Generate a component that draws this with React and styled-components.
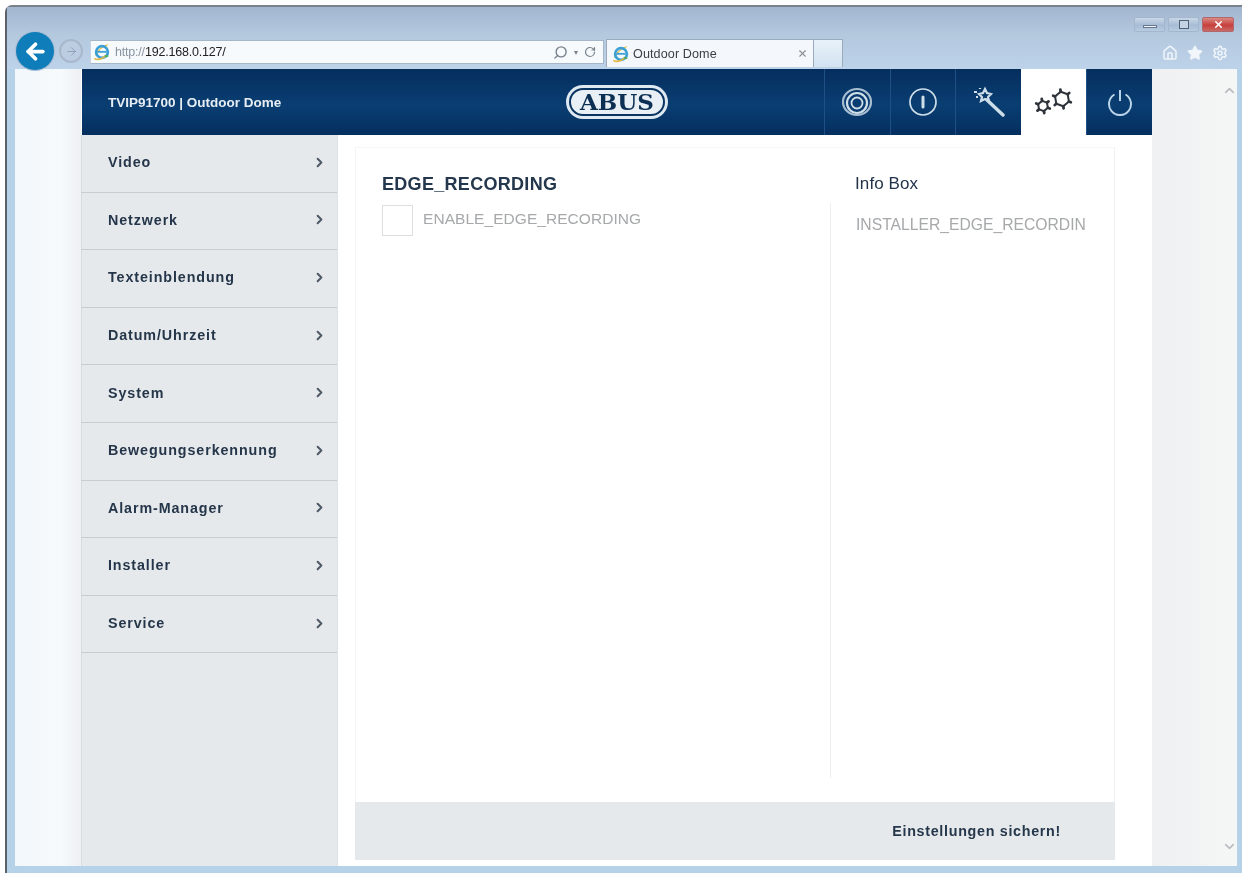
import styled, { createGlobalStyle } from "styled-components";
import { ArrowLeft, ArrowRight, ChevronDown, ChevronRight, ChevronUp, Home, RotateCw, Search, Settings, Star, X } from "lucide-react";

const menu = [
  "Video",
  "Netzwerk",
  "Texteinblendung",
  "Datum/Uhrzeit",
  "System",
  "Bewegungserkennung",
  "Alarm-Manager",
  "Installer",
  "Service",
];

const GlobalStyle = createGlobalStyle`
  html, body {
    margin: 0;
    padding: 0;
    background: #fff;
  }
  * {
    box-sizing: border-box;
  }
`;

const Page = styled.div`
  width: 1242px;
  height: 873px;
  padding: 5px 0 0 5px;
  overflow: hidden;
  background: #fff;
  font-family: "Liberation Sans", Arial, sans-serif;
  filter: blur(0.45px);
`;

const Frame = styled.div`
  display: flex;
  flex-direction: column;
  height: 868px;
  padding: 0 5px 7px 8px;
  border-radius: 7px 0 0 0;
  border-top: 2px solid #79818a;
  border-left: 2px solid #5c6167;
  background: #b5d2e8;
`;

const Chrome = styled.div`
  margin: 0 -5px 0 -8px;
  padding: 11px 8px 0 9px;
  height: 62px;
  flex: none;
  background: linear-gradient(180deg, #a3b6d0 0%, #b4c8de 45%, #bdd3e9 100%);
`;

const WindowControls = styled.div`
  display: flex;
  justify-content: flex-end;
  gap: 3px;
  height: 17px;
  margin-top: -1px;
`;

const WinButton = styled.div`
  width: ${(props) => (props.$wide ? 32 : 31)}px;
  height: 15px;
  display: flex;
  align-items: center;
  justify-content: center;
  border: 1px solid ${(props) => (props.$close ? "#b0686a" : "#a3b6cc")};
  border-radius: 2px;
  background: ${(props) =>
    props.$close
      ? "linear-gradient(180deg, #d98a85 0%, #c8403c 55%, #c96a66 100%)"
      : "linear-gradient(180deg, #c9d8e8 0%, #a7bcd4 55%, #b7cbe0 100%)"};
  color: #fff;
`;

const MinGlyph = styled.span`
  width: 14px;
  height: 3px;
  margin-top: 4px;
  background: #f1f5f9;
  border: 1px solid #66788f;
`;

const MaxGlyph = styled.span`
  width: 10px;
  height: 9px;
  border: 1px solid #4f6178;
  background: #c3d3e4;
`;

const NavRow = styled.div`
  display: flex;
  align-items: flex-end;
  height: 34px;
  margin-top: -1px;
`;

const BackButton = styled.div`
  width: 38px;
  height: 38px;
  margin-bottom: -3px;
  flex: none;
  border-radius: 50%;
  display: flex;
  align-items: center;
  justify-content: center;
  background: #0f7dba;
  color: #fff;
  box-shadow: 0 0 0 1px #a9bdd3;
  position: relative;
`;

const ForwardButton = styled.div`
  width: 24px;
  height: 24px;
  margin: 0 7px 4px 5px;
  flex: none;
  border-radius: 50%;
  display: flex;
  align-items: center;
  justify-content: center;
  border: 2px solid #a9b7ca;
  background: #bccde1;
  color: #8fa0b6;
`;

const AddressBar = styled.div`
  width: 514px;
  height: 24px;
  margin-bottom: 3px;
  flex: none;
  display: flex;
  align-items: center;
  padding: 0 7px 0 2px;
  background: #f7fafd;
  border: 1px solid #a6b6c9;
  border-left-color: #c6d3e1;
`;

const Url = styled.span`
  margin-left: 4px;
  font-size: 12.5px;
  letter-spacing: -0.2px;
  color: #222;
  flex: 1;
`;

const UrlMuted = styled.span`
  color: #8a95a2;
`;

const AddressTools = styled.div`
  display: flex;
  align-items: center;
  gap: 6px;
  color: #77818c;
  font-size: 8px;
`;

const Tab = styled.div`
  width: 208px;
  height: 28px;
  margin-left: 2px;
  flex: none;
  display: flex;
  align-items: center;
  padding: 0 5px 0 5px;
  background: #f4f8fc;
  border: 1px solid #9aabbe;
  border-bottom: none;
  font-size: 12.6px;
  letter-spacing: 0.1px;
  color: #3a3f46;
`;

const TabTitle = styled.span`
  margin-left: 3px;
  flex: 1;
`;

const EmptyTab = styled.div`
  width: 29px;
  height: 28px;
  flex: none;
  background: linear-gradient(180deg, #e8f1f9, #d3e3f1);
  border-right: 1px solid #9aabbe;
  border-top: 1px solid #9aabbe;
`;

const BrowserTools = styled.div`
  margin-left: auto;
  margin-right: 6px;
  margin-bottom: 6px;
  display: flex;
  gap: 9px;
  color: #eef4f9;
`;

const Content = styled.div`
  flex: 1;
  min-height: 0;
  display: flex;
`;

const Gutter = styled.div`
  width: 66px;
  flex: none;
  background: linear-gradient(90deg, #f2f7fb 0%, #f6fafd 70%, #eef0f2 100%);
`;

const AppColumn = styled.div`
  width: 1071px;
  flex: none;
  display: flex;
  flex-direction: column;
  background: #fff;
`;

const Header = styled.header`
  height: 66px;
  flex: none;
  display: flex;
  margin-left: 1px;
  background: linear-gradient(180deg, #052e5e 0%, #0a3e72 55%, #042f5f 100%);
`;

const Brand = styled.div`
  width: 328px;
  flex: none;
  padding-left: 26px;
  display: flex;
  align-items: center;
  font-size: 13.5px;
  font-weight: 700;
  color: #e6edf3;
`;

const LogoSlot = styled.div`
  width: 414px;
  flex: none;
  display: flex;
  justify-content: center;
  align-items: center;
  padding-bottom: 1px;
`;

const Logo = styled.div`
  width: 102px;
  height: 34px;
  padding: 3px;
  border-radius: 17px;
  background: #dfe9f1;
`;

const LogoInner = styled.div`
  height: 100%;
  border-radius: 14px;
  border: 2px solid #0a3563;
  display: flex;
  align-items: center;
  justify-content: center;
  background: #e8eff5;
  font-family: "DejaVu Serif", serif;
  font-size: 23px;
  font-weight: 700;
  color: #0c3053;
`;

const HeaderButton = styled.div`
  width: 65.6px;
  flex: none;
  display: flex;
  align-items: center;
  justify-content: center;
  color: ${(props) => (props.$active ? "#2f343b" : "#cfdfea")};
  background: ${(props) => (props.$active ? "#fff" : "transparent")};
  border-left: 1px solid ${(props) => (props.$active ? "#fff" : "#1f5085")};
`;

const Body = styled.div`
  flex: 1;
  min-height: 0;
  display: flex;
`;

const Sidebar = styled.nav`
  width: 257px;
  flex: none;
  background: #e6e9eb;
  box-shadow: inset 1px 0 0 #d9dcdf;
  border-right: 1px solid #dfe2e4;
`;

const MenuItem = styled.div`
  height: 57.6px;
  display: flex;
  align-items: center;
  justify-content: space-between;
  padding: 0 10px 2px 27px;
  border-bottom: 1.5px solid #c9cdd0;
  font-size: 14.3px;
  font-weight: 700;
  letter-spacing: 0.9px;
  color: #25364a;
`;

const Main = styled.main`
  flex: 1;
  min-width: 0;
  display: flex;
  flex-direction: column;
  padding: 12px 37px 6px 17px;
`;

const Panel = styled.section`
  flex: 1;
  min-height: 0;
  display: flex;
  border-top: 1px solid #f5f6f7;
  border-left: 1px solid #f3f4f5;
  border-right: 1px solid #eef0f1;
`;

const SettingsCol = styled.div`
  width: 474px;
  flex: none;
  padding: 26px 0 0 26px;
`;

const SectionTitle = styled.h2`
  margin: 0;
  font-size: 18px;
  line-height: 20px;
  font-weight: 700;
  letter-spacing: 0.3px;
  color: #24374c;
`;

const CheckRow = styled.label`
  display: flex;
  margin-top: 11px;
  gap: 10px;
`;

const CheckBox = styled.span`
  width: 31px;
  height: 31px;
  flex: none;
  background: #fff;
  border: 1px solid #dcdfe1;
`;

const CheckLabel = styled.span`
  font-size: 15.5px;
  line-height: 18px;
  margin-top: 5px;
  letter-spacing: 0.05px;
  color: #a6a8aa;
`;

const InfoCol = styled.div`
  flex: 1;
  min-width: 0;
  display: flex;
  flex-direction: column;
  padding-top: 26px;
`;

const InfoTitle = styled.h3`
  margin: 0 0 0 25px;
  height: 29px;
  font-size: 17px;
  line-height: 20px;
  font-weight: 400;
  letter-spacing: 0.1px;
  color: #22344a;
`;

const InfoBody = styled.div`
  flex: 1;
  margin-bottom: 24px;
  padding: 13px 20px 0 25px;
  border-left: 1px solid #eceef0;
`;

const InfoText = styled.div`
  font-size: 15.7px;
  line-height: 18px;
  letter-spacing: 0;
  white-space: nowrap;
  color: #a6a8aa;
`;

const Footer = styled.div`
  height: 58px;
  flex: none;
  display: flex;
  align-items: center;
  justify-content: flex-end;
  padding: 0 54px 0 0;
  background: #e6e9eb;
`;

const SaveButton = styled.span`
  font-size: 14.3px;
  font-weight: 700;
  letter-spacing: 0.7px;
  color: #25374b;
`;

const Scrollbar = styled.div`
  flex: 1;
  display: flex;
  flex-direction: column;
  justify-content: space-between;
  align-items: flex-end;
  padding: 14px 0 12px;
  background: linear-gradient(90deg, #eef0f1 0%, #f5f6f6 100%);
  color: #b9bdc0;
`;

const IeLogo = ({ size = 18 }) => (
  <svg width={size} height={size} viewBox="0 0 20 20">
    <path d="M2 14c3-7 8-11 15-13-2 3-2 3-2 3-5 1-8 4-11 10z" fill="#e8c14a" />
    <circle cx="10" cy="10" r="6.5" fill="none" stroke="#3c9fd6" strokeWidth="3" />
    <path d="M5 9.8h10" stroke="#3c9fd6" strokeWidth="2" />
    <path d="M1.5 17c3 2 8 1 13-3" fill="none" stroke="#e2b83e" strokeWidth="1.8" />
    <path d="M13 14.5h4" stroke="#59ab5d" strokeWidth="2" />
  </svg>
);

const DomeIcon = () => (
  <svg width="32" height="30" viewBox="0 0 32 30" fill="none" stroke="currentColor">
    <ellipse cx="16" cy="15" rx="14" ry="13" strokeWidth="2.2" opacity="0.8" />
    <circle cx="16" cy="16" r="10" strokeWidth="2.2" />
    <circle cx="16" cy="16" r="5.5" strokeWidth="1.8" />
  </svg>
);

const InfoIcon = () => (
  <svg width="30" height="30" viewBox="0 0 30 30" fill="none" stroke="currentColor">
    <circle cx="15" cy="15" r="13" strokeWidth="1.7" />
    <path d="M15 10v10" strokeWidth="3" strokeLinecap="round" />
  </svg>
);

const WandIcon = () => (
  <svg width="34" height="34" viewBox="0 0 34 34" fill="none" stroke="currentColor">
    <path d="M16 15l16 15" strokeWidth="3.4" strokeLinecap="round" />
    <path d="M14 4l2 4 4 1-3 3 1 4-4-2-4 2 1-4-3-3 4-1z" strokeWidth="2.2" />
    <path d="M3 7h3M5 12h2M9 3v1" strokeWidth="2.2" />
  </svg>
);

const gearPoints = (cx, cy, r) =>
  [0, 1, 2, 3, 4, 5].map((i) => {
    const a = (Math.PI / 3) * i + 0.35;
    return [cx + r * Math.cos(a), cy + r * Math.sin(a)];
  });

const Gear = ({ cx, cy, r }) => {
  const pts = gearPoints(cx, cy, r);
  const outer = gearPoints(cx, cy, r + 2);
  return (
    <>
      <polygon points={pts.map((p) => p.join(",")).join(" ")} strokeWidth="2" />
      {pts.map((p, i) => (
        <path key={i} d={`M${p[0]} ${p[1]}L${outer[i][0]} ${outer[i][1]}`} strokeWidth="2.8" strokeLinecap="round" />
      ))}
    </>
  );
};

const GearsIcon = () => (
  <svg width="40" height="30" viewBox="0 0 40 30" fill="none" stroke="currentColor">
    <Gear cx={9} cy={19} r={5.2} />
    <Gear cx={28} cy={12} r={7.4} />
  </svg>
);

const PowerIcon = () => (
  <svg width="26" height="28" viewBox="0 0 26 28" fill="none" stroke="#b9d4e8" strokeWidth="2">
    <path d="M7.5 6.5a11 11 0 1 0 11 0" />
    <path d="M13 2v11" />
  </svg>
);

const App = () => {
  return (
    <Page>
      <GlobalStyle />
      <Frame>
        <Chrome>
          <WindowControls>
            <WinButton>
              <MinGlyph />
            </WinButton>
            <WinButton>
              <MaxGlyph />
            </WinButton>
            <WinButton $wide $close>
              <X size={11} strokeWidth={3.5} />
            </WinButton>
          </WindowControls>
          <NavRow>
            <BackButton>
              <ArrowLeft size={25} strokeWidth={3.6} />
            </BackButton>
            <ForwardButton>
              <ArrowRight size={13} strokeWidth={1.8} />
            </ForwardButton>
            <AddressBar>
              <IeLogo />
              <Url>
                <UrlMuted>http://</UrlMuted>192.168.0.127/
              </Url>
              <AddressTools>
                <Search size={15} strokeWidth={2.2} style={{ transform: "scaleX(-1)" }} />
                <span>▾</span>
                <RotateCw size={12} strokeWidth={2.4} />
              </AddressTools>
            </AddressBar>
            <Tab>
              <IeLogo />
              <TabTitle>Outdoor Dome</TabTitle>
              <X size={11} color="#8a8f96" strokeWidth={2.4} />
            </Tab>
            <EmptyTab />
            <BrowserTools>
              <Home size={16} strokeWidth={2.4} />
              <Star size={16} strokeWidth={2} fill="#f2f6fa" />
              <Settings size={16} strokeWidth={2.4} />
            </BrowserTools>
          </NavRow>
        </Chrome>
        <Content>
          <Gutter />
          <AppColumn>
            <Header>
              <Brand>TVIP91700 | Outdoor Dome</Brand>
              <LogoSlot>
                <Logo>
                  <LogoInner>ABUS</LogoInner>
                </Logo>
              </LogoSlot>
              <HeaderButton>
                <DomeIcon />
              </HeaderButton>
              <HeaderButton>
                <InfoIcon />
              </HeaderButton>
              <HeaderButton>
                <WandIcon />
              </HeaderButton>
              <HeaderButton $active>
                <GearsIcon />
              </HeaderButton>
              <HeaderButton>
                <PowerIcon />
              </HeaderButton>
            </Header>
            <Body>
              <Sidebar>
                {menu.map((item) => (
                  <MenuItem key={item}>
                    {item}
                    <ChevronRight size={15} strokeWidth={3.2} color="#4d5966" />
                  </MenuItem>
                ))}
              </Sidebar>
              <Main>
                <Panel>
                  <SettingsCol>
                    <SectionTitle>EDGE_RECORDING</SectionTitle>
                    <CheckRow>
                      <CheckBox />
                      <CheckLabel>ENABLE_EDGE_RECORDING</CheckLabel>
                    </CheckRow>
                  </SettingsCol>
                  <InfoCol>
                    <InfoTitle>Info Box</InfoTitle>
                    <InfoBody>
                      <InfoText>INSTALLER_EDGE_RECORDIN</InfoText>
                    </InfoBody>
                  </InfoCol>
                </Panel>
                <Footer>
                  <SaveButton>Einstellungen sichern!</SaveButton>
                </Footer>
              </Main>
            </Body>
          </AppColumn>
          <Scrollbar>
            <ChevronUp size={15} strokeWidth={2.6} />
            <ChevronDown size={15} strokeWidth={2.6} />
          </Scrollbar>
        </Content>
      </Frame>
    </Page>
  );
};

export default App;
